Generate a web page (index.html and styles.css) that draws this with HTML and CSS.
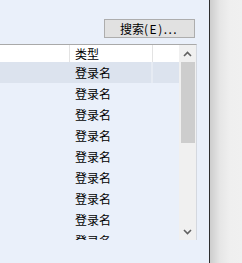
FILE: index.html
```html
<!DOCTYPE html>
<html lang="zh-CN">
<head>
    <meta charset="UTF-8">
    <title>搜索</title>
    <link rel="stylesheet" href="styles.css">
</head>
<body>
    <div class="screen">
        <div class="window">
            <!-- toolbar -->
            <div class="toolbar">
                <button class="btn">搜索<span class="key">(E)...</span></button>
            </div>

            <!-- result list -->
            <div class="list">
                <div class="list-body">
                    <div class="row head">
                        <span class="cell c1"></span>
                        <span class="cell c2">类型</span>
                        <span class="cell c3"></span>
                    </div>
                    <div class="row sel"><span class="cell"></span><span class="cell">登录名</span><span class="cell"></span></div>
                    <div class="row"><span class="cell"></span><span class="cell">登录名</span><span class="cell"></span></div>
                    <div class="row"><span class="cell"></span><span class="cell">登录名</span><span class="cell"></span></div>
                    <div class="row"><span class="cell"></span><span class="cell">登录名</span><span class="cell"></span></div>
                    <div class="row"><span class="cell"></span><span class="cell">登录名</span><span class="cell"></span></div>
                    <div class="row"><span class="cell"></span><span class="cell">登录名</span><span class="cell"></span></div>
                    <div class="row"><span class="cell"></span><span class="cell">登录名</span><span class="cell"></span></div>
                    <div class="row"><span class="cell"></span><span class="cell">登录名</span><span class="cell"></span></div>
                    <div class="row"><span class="cell"></span><span class="cell">登录名</span><span class="cell"></span></div>
                </div>

                <div class="scrollbar">
                    <div class="sb-btn">
                        <svg width="9" height="6" viewBox="0 0 9 6"><path d="M1 5 L4.5 1.5 L8 5" fill="none" stroke="#606060" stroke-width="1.6"/></svg>
                    </div>
                    <div class="sb-track">
                        <div class="thumb"></div>
                    </div>
                    <div class="sb-btn">
                        <svg width="9" height="6" viewBox="0 0 9 6"><path d="M1 1 L4.5 4.5 L8 1" fill="none" stroke="#606060" stroke-width="1.6"/></svg>
                    </div>
                </div>
            </div>
        </div>

        <!-- area outside the dialog -->
        <div class="outside"></div>
    </div>
</body>
</html>
```

FILE: styles.css
```css
* {
    margin: 0;
    padding: 0;
    box-sizing: border-box;
}
body {
    font-family: "Noto Sans CJK SC", "DejaVu Sans", sans-serif;
    font-size: 12px;
    color: #000;
    overflow: hidden;
}
.screen {
    display: flex;
    width: 242px;
    height: 263px;
}
.window {
    width: 210px;
    height: 263px;
    background: #eaf0fa;
    border-right: 1px solid #2e2e2e;
    padding-top: 19px;
}
.toolbar {
    display: flex;
    justify-content: flex-end;
    padding-right: 14px;
}
.btn {
    width: 91px;
    height: 19px;
    background: #e1e1e1;
    border: 1px solid #adadad;
    font-family: inherit;
    font-size: 12px;
    line-height: 16px;
    color: #000;
    text-align: left;
    padding-left: 15px;
    white-space: nowrap;
}
.btn .key {
    letter-spacing: 1.5px;
}
.list {
    display: flex;
    margin-top: 6px;
    width: 197px;
    height: 196px;
    border-top: 1px solid #a9a9a9;
    border-right: 1px solid #d4d8df;
    overflow: hidden;
}
.list-body {
    flex: 1;
    overflow: hidden;
}
.row {
    display: grid;
    grid-template-columns: 70px 83px 26px;
    height: 21px;
    line-height: 21px;
}
.row .cell {
    padding-left: 5px;
    white-space: nowrap;
}
.row.head {
    height: 17px;
    line-height: 17px;
    background: #fff;
}
.row.head .c1,
.row.head .c2 {
    border-right: 1px solid #e3e3e3;
}
.row.sel {
    background: #dce3ee;
}
.row.sel .cell:nth-child(2) {
    border-right: 2px solid #e6ebf3;
}
.scrollbar {
    width: 17px;
    display: flex;
    flex-direction: column;
    background: #f0f0f0;
}
.sb-btn {
    height: 17px;
    display: flex;
    align-items: center;
    justify-content: center;
}
.sb-track {
    flex: 1;
    padding: 0 1px 0 2px;
}
.thumb {
    height: 81px;
    background: #cdcdcd;
}
.outside {
    flex: 1;
    background: linear-gradient(to right, #cdcdcd, #e6e6e6 10px, #efefef 20px, #f0f0f0);
}
```
